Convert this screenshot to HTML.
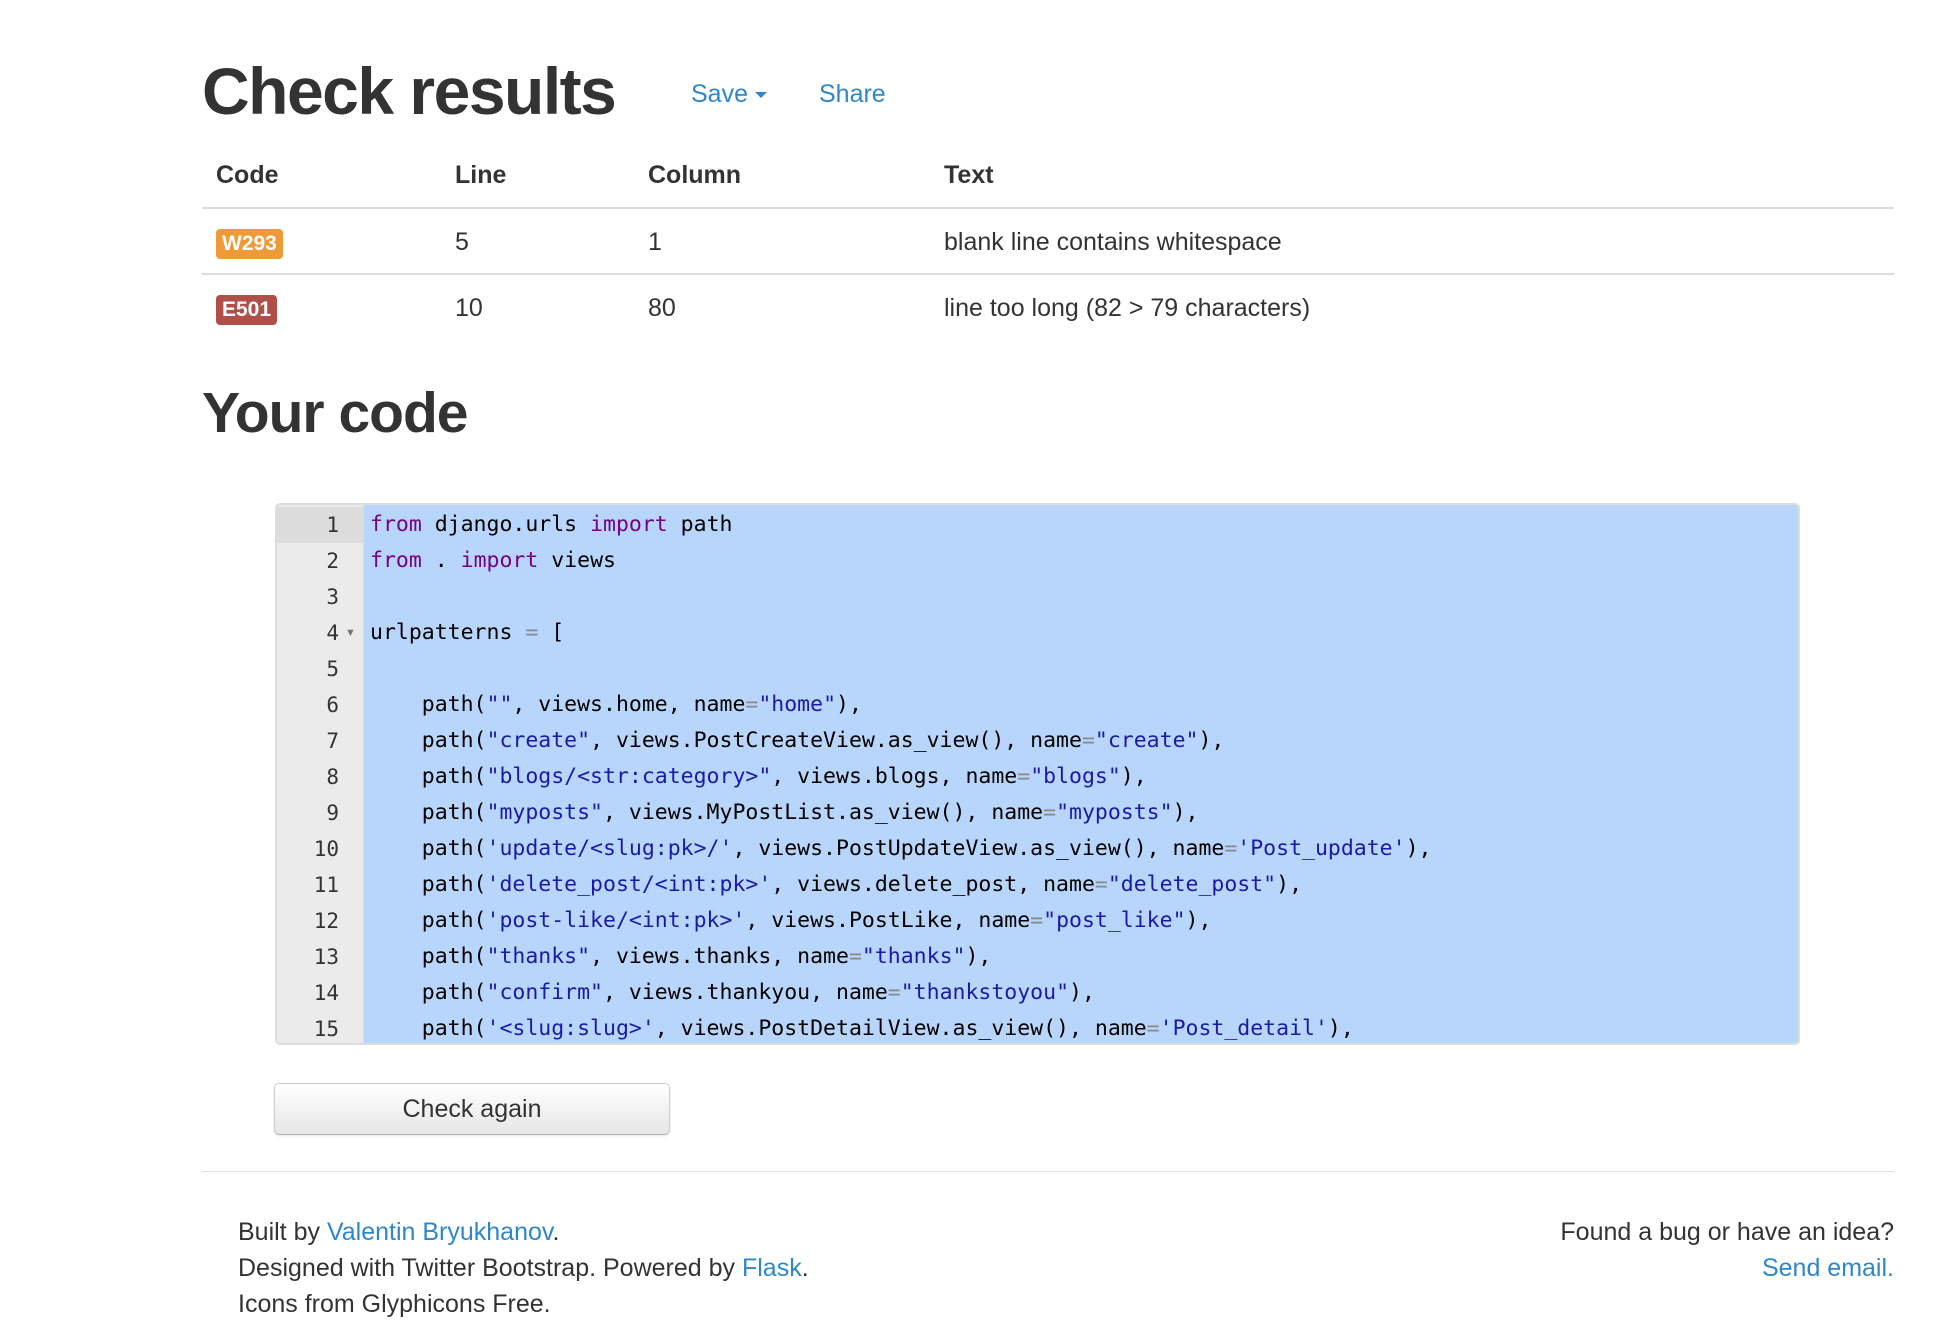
<!DOCTYPE html>
<html><head><meta charset="utf-8"><style>
*{box-sizing:border-box;margin:0;padding:0}
body{width:1960px;height:1298px;overflow:hidden;background:#fff;font-family:"Liberation Sans",Arial,sans-serif;color:#333;font-size:25px;position:relative}
.a{position:absolute;white-space:nowrap}
a{color:#2f86c9;text-decoration:none}
h1{font-size:66px;font-weight:bold;letter-spacing:-1.5px}
.lab{display:inline-block;color:#fff;font-weight:bold;font-size:21px;padding:3px 6px;border-radius:4px;line-height:24px}
.ed{position:absolute;left:275px;top:503px;width:1525px;height:542px;border:2px solid #ddd;border-radius:5px;background:#b8d5fb;overflow:hidden}
.gut{position:absolute;left:0;top:0;width:87px;height:100%;background:#ebebeb;border-right:1px solid #ddd}
.ln{position:absolute;left:0;width:62px;text-align:right;font-family:"DejaVu Sans Mono","Liberation Mono",monospace;font-size:21px;color:#333;height:36px;line-height:36px}
.cl{position:absolute;left:93px;font-family:"DejaVu Sans Mono","Liberation Mono",monospace;font-size:21.5px;color:#000;height:36px;line-height:36px;white-space:pre;letter-spacing:0px}
.k{color:#770088}.s{color:#1a1aa6}.o{color:#888}
.btn{position:absolute;left:274px;top:1083px;width:396px;height:52px;border:1px solid #ccc;border-bottom-color:#b3b3b3;border-radius:5px;background:linear-gradient(#fff,#e6e6e6);text-align:center;line-height:50px;font-size:25px;color:#333;box-shadow:0 1px 2px rgba(0,0,0,.1)}
</style></head><body>
<h1 class="a" style="left:202px;top:53px">Check results</h1>
<div class="a" style="left:691px;top:80px"><a>Save <span style="display:inline-block;width:0;height:0;border-left:6px solid transparent;border-right:6px solid transparent;border-top:6px solid #2f86c9;vertical-align:middle"></span></a></div>
<div class="a" style="left:819px;top:80px"><a>Share</a></div>

<div class="a" style="left:216px;top:161px;font-weight:bold">Code</div>
<div class="a" style="left:455px;top:161px;font-weight:bold">Line</div>
<div class="a" style="left:648px;top:161px;font-weight:bold">Column</div>
<div class="a" style="left:944px;top:161px;font-weight:bold">Text</div>
<div class="a" style="left:202px;top:207px;width:1692px;height:2px;background:#ddd"></div>
<div class="a" style="left:216px;top:228px"><span class="lab" style="background:#ee9a36">W293</span></div>
<div class="a" style="left:455px;top:228px">5</div>
<div class="a" style="left:648px;top:228px">1</div>
<div class="a" style="left:944px;top:228px">blank line contains whitespace</div>
<div class="a" style="left:202px;top:273px;width:1692px;height:2px;background:#ddd"></div>
<div class="a" style="left:216px;top:294px"><span class="lab" style="background:#b04e49">E501</span></div>
<div class="a" style="left:455px;top:294px">10</div>
<div class="a" style="left:648px;top:294px">80</div>
<div class="a" style="left:944px;top:294px">line too long (82 &gt; 79 characters)</div>

<h1 class="a" style="left:202px;top:380px;font-size:57px;letter-spacing:-1px">Your code</h1>

<div class="ed">
<div class="gut"></div>
<div style="position:absolute;left:0;top:2px;width:87px;height:36px;background:#dcdcdc"></div>
<div class="ln" style="top:2px">1</div><div class="ln" style="top:38px">2</div><div class="ln" style="top:74px">3</div>
<div class="ln" style="top:110px">4</div><div class="a" style="left:68px;top:110px;line-height:36px;font-size:11px;color:#777">▼</div>
<div class="ln" style="top:146px">5</div><div class="ln" style="top:182px">6</div><div class="ln" style="top:218px">7</div><div class="ln" style="top:254px">8</div><div class="ln" style="top:290px">9</div><div class="ln" style="top:326px">10</div><div class="ln" style="top:362px">11</div><div class="ln" style="top:398px">12</div><div class="ln" style="top:434px">13</div><div class="ln" style="top:470px">14</div><div class="ln" style="top:506px">15</div>
<div class="cl" style="top:2px"><span class="k">from</span> django.urls <span class="k">import</span> path</div>
<div class="cl" style="top:38px"><span class="k">from</span> . <span class="k">import</span> views</div>
<div class="cl" style="top:110px">urlpatterns <span class="o">=</span> [</div>
<div class="cl" style="top:182px">    path(<span class="s">""</span>, views.home, name<span class="o">=</span><span class="s">"home"</span>),</div>
<div class="cl" style="top:218px">    path(<span class="s">"create"</span>, views.PostCreateView.as_view(), name<span class="o">=</span><span class="s">"create"</span>),</div>
<div class="cl" style="top:254px">    path(<span class="s">"blogs/&lt;str:category&gt;"</span>, views.blogs, name<span class="o">=</span><span class="s">"blogs"</span>),</div>
<div class="cl" style="top:290px">    path(<span class="s">"myposts"</span>, views.MyPostList.as_view(), name<span class="o">=</span><span class="s">"myposts"</span>),</div>
<div class="cl" style="top:326px">    path(<span class="s">'update/&lt;slug:pk&gt;/'</span>, views.PostUpdateView.as_view(), name<span class="o">=</span><span class="s">'Post_update'</span>),</div>
<div class="cl" style="top:362px">    path(<span class="s">'delete_post/&lt;int:pk&gt;'</span>, views.delete_post, name<span class="o">=</span><span class="s">"delete_post"</span>),</div>
<div class="cl" style="top:398px">    path(<span class="s">'post-like/&lt;int:pk&gt;'</span>, views.PostLike, name<span class="o">=</span><span class="s">"post_like"</span>),</div>
<div class="cl" style="top:434px">    path(<span class="s">"thanks"</span>, views.thanks, name<span class="o">=</span><span class="s">"thanks"</span>),</div>
<div class="cl" style="top:470px">    path(<span class="s">"confirm"</span>, views.thankyou, name<span class="o">=</span><span class="s">"thankstoyou"</span>),</div>
<div class="cl" style="top:506px">    path(<span class="s">'&lt;slug:slug&gt;'</span>, views.PostDetailView.as_view(), name<span class="o">=</span><span class="s">'Post_detail'</span>),</div>
</div>

<div class="btn">Check again</div>
<div class="a" style="left:202px;top:1171px;width:1692px;height:1px;background:#e5e5e5"></div>

<div class="a" style="left:238px;top:1214px;line-height:36px">Built by <a>Valentin Bryukhanov</a>.<br>Designed with Twitter Bootstrap. Powered by <a>Flask</a>.<br>Icons from Glyphicons Free.</div>
<div class="a" style="right:66px;top:1214px;line-height:36px;text-align:right">Found a bug or have an idea?<br><a>Send email.</a></div>
</body></html>
